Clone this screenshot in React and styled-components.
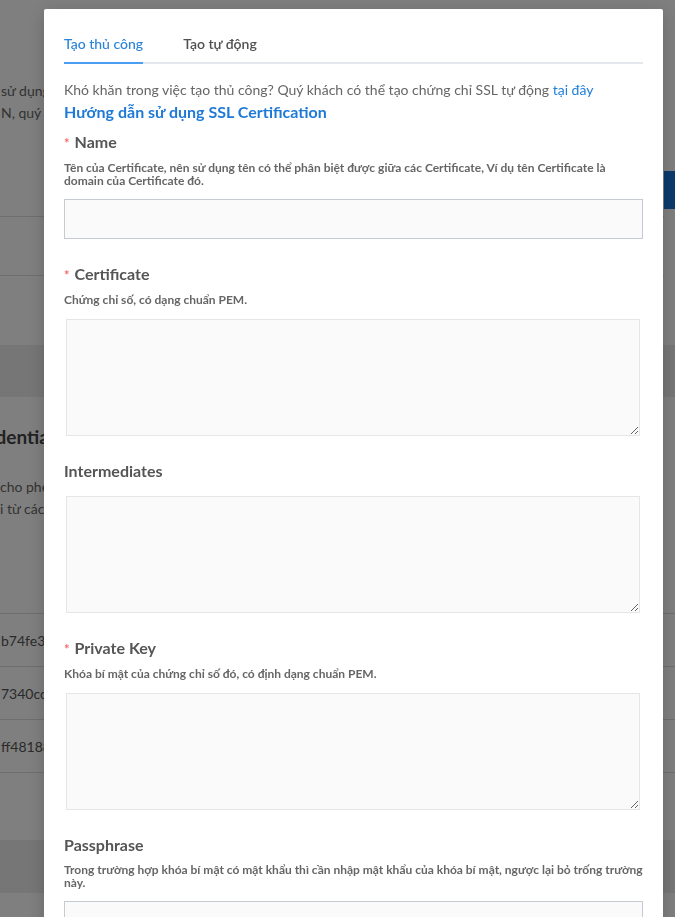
import React from 'react';
import styled, { createGlobalStyle } from 'styled-components';

const GlobalStyle = createGlobalStyle`
  html, body {
    margin: 0;
    padding: 0;
    height: 100%;
    overflow: hidden;
  }
  body {
    font-family: Lato, "Noto Sans", "Liberation Sans", sans-serif;
    background: #ededed;
  }
  * { box-sizing: border-box; }
`;

/* ---------- page behind the dialog ---------- */

const Page = styled.div`
  height: 917px;
  display: flex;
  flex-direction: column;
  background: #ededed;
  overflow: hidden;
`;

const TopCard = styled.section`
  display: grid;
  grid-template-columns: 1fr 11px;
  background: #fff;
`;

const TopBody = styled.div`
  display: flex;
  flex-direction: column;
`;

const Intro = styled.div`
  height: 217px;
  padding: 80px 0 0 1px;
  border-bottom: 1px solid #dcdcdc;
`;

const BgText = styled.p`
  margin: 0;
  font-size: 14px;
  line-height: 22px;
  color: #666;
  white-space: nowrap;
`;

const BgRow = styled.div`
  height: ${(p) => p.$h}px;
  border-bottom: ${(p) => (p.$last ? 'none' : '1px solid #dcdcdc')};
`;

const SideCol = styled.div`
  padding-top: 171px;
`;

const PrimaryButton = styled.div`
  height: 38px;
  background: #1774d6;
`;

const Gap = styled.div`
  height: ${(p) => p.$h}px;
  flex: none;
`;

const Card = styled.section`
  background: #fff;
  flex: none;
  height: ${(p) => (p.$h ? `${p.$h}px` : 'auto')};
  display: flex;
  flex-direction: column;
  padding-top: ${(p) => p.$pt || 0}px;
`;

const BgHeading = styled.h2`
  margin: 0 0 26px;
  font-size: 19px;
  line-height: 26px;
  font-weight: 700;
  color: #444;
  white-space: nowrap;
  text-indent: -34px;
`;

const BgTable = styled.div`
  margin-top: 93px;
  border-top: 1px solid #dcdcdc;
`;

const BgCell = styled.div`
  height: 53px;
  display: flex;
  align-items: center;
  border-bottom: 1px solid #dcdcdc;
  font-size: 14px;
  color: #555;
  white-space: nowrap;
  padding-left: 1px;
`;

/* ---------- dialog ---------- */

const Backdrop = styled.div`
  position: fixed;
  inset: 0;
  background: rgba(0, 0, 0, 0.5);
`;

const Dialog = styled.div`
  position: absolute;
  top: 9px;
  left: 44px;
  width: 619px;
  background: #fff;
  border-radius: 2px;
  box-shadow: 0 4px 16px rgba(0, 0, 0, 0.18);
  padding: 25px 20px 40px;
`;

const TabList = styled.div`
  display: flex;
  gap: 40px;
  border-bottom: 2px solid #e4e8ee;
`;

const Tab = styled.button`
  appearance: none;
  background: none;
  border: none;
  border-bottom: 2px solid ${(p) => (p.$active ? '#4a9ff2' : 'transparent')};
  margin: 0 0 -2px;
  padding: 0 0 8px;
  font-family: inherit;
  font-size: 14px;
  line-height: 20px;
  font-weight: ${(p) => (p.$active ? 500 : 600)};
  color: ${(p) => (p.$active ? '#2a83d8' : '#505050')};
  cursor: pointer;
`;

const Lead = styled.p`
  margin: 16px 0 0;
  font-size: 14px;
  line-height: 20px;
  color: #666;
`;

const Link = styled.a`
  color: #1f80dc;
  text-decoration: none;
`;

const GuideLink = styled.a`
  display: block;
  margin-top: 1px;
  font-size: 16px;
  line-height: 22px;
  font-weight: 700;
  color: #1f7ad6;
  text-decoration: none;
`;

const Form = styled.form`
  display: flex;
  flex-direction: column;
  gap: 24px;
  margin-top: 8px;
`;

const Field = styled.div`
  display: flex;
  flex-direction: column;
`;

const Label = styled.label`
  display: flex;
  align-items: baseline;
  font-size: 16px;
  line-height: 22px;
  font-weight: 700;
  color: #555;
`;

const Required = styled.span`
  color: #f56c6c;
  font-size: 13px;
  margin-right: 5px;
`;

const Hint = styled.p`
  margin: 7px -2px -1px 0;
  font-size: 12px;
  line-height: 13px;
  font-weight: 700;
  color: #666;
`;

const TextInput = styled.input`
  display: block;
  margin-top: 13px;
  width: 100%;
  height: 40px;
  border: 1px solid #c5cad3;
  border-radius: 0;
  background: #fafafa;
  font-family: inherit;
  font-size: 14px;
  padding: 0 10px;
  outline: none;
`;

const TextArea = styled.textarea`
  display: block;
  margin: 14px 3px 0 2px;
  width: calc(100% - 5px);
  height: 117px;
  border: 1px solid #e6e6e6;
  border-radius: 0;
  background: #fafafa;
  font-family: inherit;
  font-size: 14px;
  padding: 8px 10px;
  outline: none;
`;

const fields = [
  {
    name: 'Name',
    required: true,
    hint: 'Tên của Certificate, nên sử dụng tên có thể phân biệt được giữa các Certificate, Ví dụ tên Certificate là domain của Certificate đó.',
    kind: 'input',
  },
  {
    name: 'Certificate',
    required: true,
    hint: 'Chứng chỉ số, có dạng chuẩn PEM.',
    kind: 'area',
  },
  { name: 'Intermediates', required: false, hint: null, kind: 'area' },
  {
    name: 'Private Key',
    required: true,
    hint: 'Khóa bí mật của chứng chỉ số đó, có định dạng chuẩn PEM.',
    kind: 'area',
  },
  {
    name: 'Passphrase',
    required: false,
    hint: 'Trong trường hợp khóa bí mật có mật khẩu thì cần nhập mật khẩu của khóa bí mật, ngược lại bỏ trống trường này.',
    kind: 'input',
  },
];

export default function App() {
  return (
    <>
      <GlobalStyle />
      <Page>
        <TopCard>
          <TopBody>
            <Intro>
              <BgText>sử dụng dịch vụ CDN để tăng tốc website</BgText>
              <BgText>N, quý khách cần cấu hình chứng chỉ SSL</BgText>
            </Intro>
            <BgRow $h={59} />
            <BgRow $h={69} $last />
          </TopBody>
          <SideCol>
            <PrimaryButton />
          </SideCol>
        </TopCard>
        <Gap $h={52} />
        <Card $h={443} $pt={27}>
          <BgHeading>Credentials</BgHeading>
          <BgText>cho phép truy cập</BgText>
          <BgText>i từ các dịch vụ khác</BgText>
          <BgTable>
            <BgCell>b74fe3a1c9</BgCell>
            <BgCell>7340cc82d1</BgCell>
            <BgCell>ff48188e07</BgCell>
          </BgTable>
        </Card>
        <Gap $h={53} />
        <Card $h={100} />
      </Page>
      <Backdrop />
      <Dialog>
        <TabList>
          <Tab $active type="button">Tạo thủ công</Tab>
          <Tab type="button">Tạo tự động</Tab>
        </TabList>
        <Lead>
          Khó khăn trong việc tạo thủ công? Quý khách có thể tạo chứng chỉ SSL tự động{' '}
          <Link href="#">tại đây</Link>
        </Lead>
        <GuideLink href="#">Hướng dẫn sử dụng SSL Certification</GuideLink>
        <Form onSubmit={(e) => e.preventDefault()}>
          {fields.map((f) => (
            <Field key={f.name}>
              <Label>
                {f.required && <Required>*</Required>}
                {f.name}
              </Label>
              {f.hint && <Hint>{f.hint}</Hint>}
              {f.kind === 'input' ? <TextInput type="text" /> : <TextArea />}
            </Field>
          ))}
        </Form>
      </Dialog>
    </>
  );
}
